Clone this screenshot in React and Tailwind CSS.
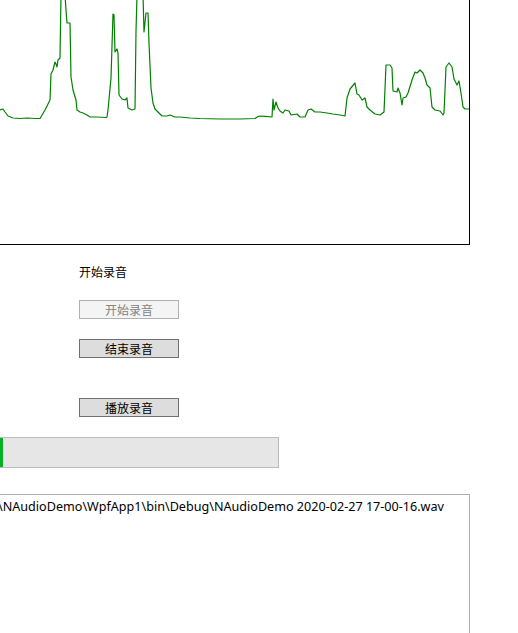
import React from "react";

// Recorded level trace, drawn as a polyline inside the canvas frame.
const TRACE = [
  [0, 110], [3, 109], [5, 112], [8, 116], [13, 118], [20, 118.5], [27, 118], [35, 118.5], [40, 118.5],
  [45, 110], [49, 102], [50, 100], [51, 74], [53, 70], [55, 62], [56, 64], [57, 67], [58, 60], [60, 58],
  [61, -5], [65, -5], [66, 10], [67, 23], [70, 23], [71, 77], [73, 90], [76, 100], [77, 110], [80, 112],
  [83, 113], [87, 115], [90, 117], [97, 117], [106, 117.5], [107, 117], [108, 110], [111, 78], [113, 14],
  [114, 15], [115, 52], [117, 49], [118, 53], [119, 95], [122, 99], [125, 100], [127, 98], [128, 108],
  [132, 110], [135, 109], [136, 31], [137, -5], [143, -5], [144, 32], [146, 13], [148, 13], [149, 43],
  [151, 88], [153, 103], [155, 109], [158, 112], [162, 116], [167, 116], [170, 115], [175, 117], [180, 117],
  [190, 118], [200, 118.5], [220, 119], [240, 119], [255, 118.5], [258, 116.5], [260, 116], [265, 116.3],
  [272, 117], [273, 99], [274, 110], [276, 102], [278, 108], [280, 111], [283, 113], [285, 110], [289, 111],
  [291, 115], [297, 114], [300, 117], [305, 117], [308, 110], [311, 109], [315, 112], [320, 112], [327, 113],
  [333, 114], [340, 115], [345, 116], [347, 98], [350, 89], [355, 83], [357, 94], [359, 95], [362, 100],
  [365, 98], [367, 107], [370, 110], [375, 114], [380, 115], [384, 112], [386, 65], [390, 65], [392, 68],
  [393, 91], [397, 92], [398, 88], [400, 93], [402, 105], [403, 98], [406, 97], [408, 93], [412, 80],
  [415, 72], [417, 73], [420, 70], [423, 73], [425, 78], [427, 85], [430, 88], [432, 107], [435, 110],
  [440, 111], [443, 115], [444, 113], [446, 67], [449, 63], [452, 67], [454, 79], [457, 85], [459, 81],
  [461, 93], [463, 107], [465, 109], [469, 109],
];

const FONT = { fontFamily: '"Noto Sans CJK SC", "Noto Sans", sans-serif' };
const PATH_FONT = { fontFamily: '"Noto Sans", "Noto Sans CJK SC", sans-serif' };

function WinButton({ children, disabled }) {
  return (
    <button
      disabled={disabled}
      className={
        disabled
          ? "ml-[79px] flex h-[19px] w-[100px] items-center justify-center border border-[#adb2b5] bg-[#f4f4f4] text-[12px] leading-none text-[#838383]"
          : "ml-[79px] flex h-[19px] w-[100px] items-center justify-center border border-[#707070] bg-[#dddddd] text-[12px] leading-none text-black"
      }
      style={FONT}
    >
      {children}
    </button>
  );
}

export default function App() {
  const points = TRACE.map(([x, y]) => `${x},${y}`).join(" ");
  return (
    <div className="relative h-[633px] w-[518px] overflow-hidden bg-white" style={FONT}>
      {/* wave canvas */}
      <div className="relative h-[245px] w-[470px] border-b border-r border-black">
        <svg className="absolute left-0 top-0" width="469" height="244" viewBox="0 0 469 244">
          <polyline points={points} fill="none" stroke="#008000" strokeWidth="1.2" strokeLinejoin="round" />
        </svg>
      </div>

      <div className="ml-[79px] mt-[19px] text-[12px] leading-[16px] text-black">开始录音</div>

      <div className="mt-[20px]">
        <WinButton disabled>开始录音</WinButton>
      </div>
      <div className="mt-[20px]">
        <WinButton>结束录音</WinButton>
      </div>
      <div className="mt-[40px]">
        <WinButton>播放录音</WinButton>
      </div>

      {/* progress bar */}
      <div className="-ml-px mt-[20px] flex h-[31px] w-[280px] border border-[#bcbcbc] bg-[#e6e6e6]">
        <div className="h-full w-[3px] bg-[#06b025]" />
      </div>

      {/* output path box */}
      <div
        className="-ml-[5px] mt-[26px] h-[160px] w-[475px] whitespace-nowrap border border-[#abadb3] bg-white pl-[2px] pt-[4px] text-[12.6px] leading-[16px] text-black"
        style={PATH_FONT}
      >
        \NAudioDemo\WpfApp1\bin\Debug\NAudioDemo 2020-02-27 17-00-16.wav
      </div>
    </div>
  );
}
